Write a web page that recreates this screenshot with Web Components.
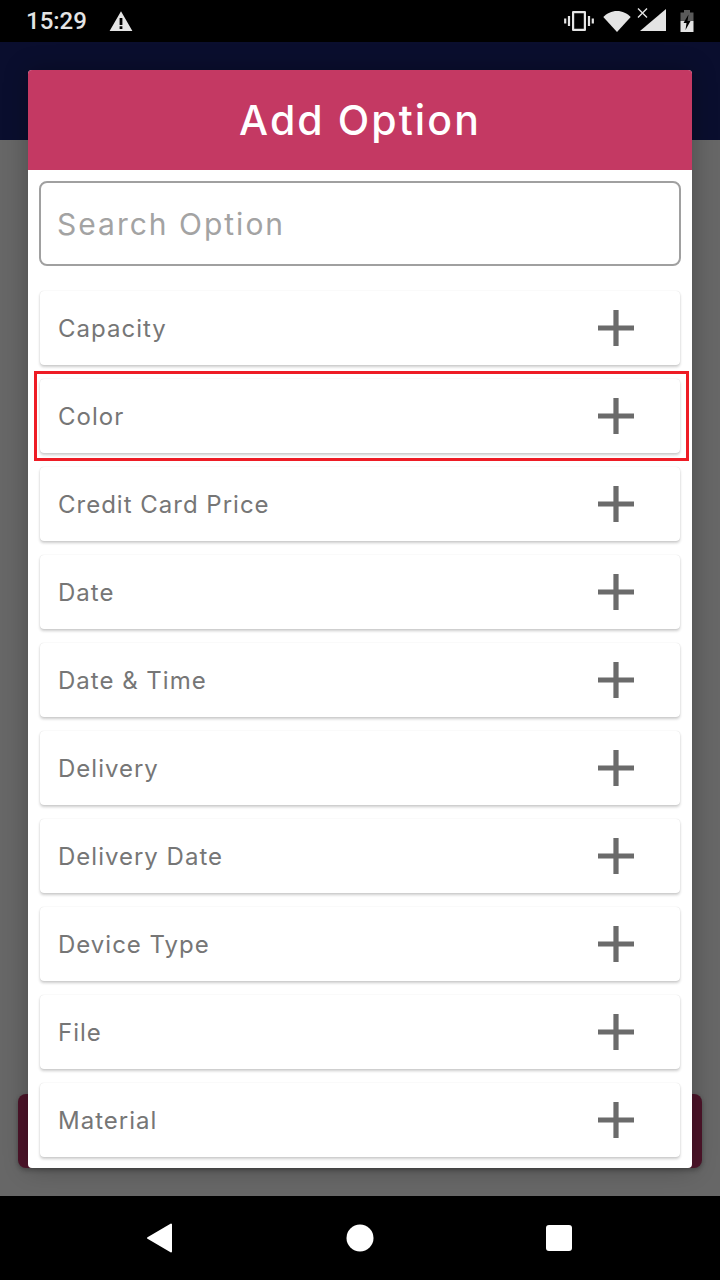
<!DOCTYPE html>
<html>
<head>
<meta charset="utf-8">
<style>
html, body { margin: 0; padding: 0; background: #000; }
body { width: 720px; height: 1280px; overflow: hidden; }
</style>
</head>
<body>
<phone-screen>
    <status-bar slot="status"></status-bar>
    <add-option-dialog slot="dialog" title-text="Add Option" placeholder="Search Option">
        <option-row>Capacity</option-row>
        <option-row marked>Color</option-row>
        <option-row>Credit Card Price</option-row>
        <option-row>Date</option-row>
        <option-row>Date &amp; Time</option-row>
        <option-row>Delivery</option-row>
        <option-row>Delivery Date</option-row>
        <option-row>Device Type</option-row>
        <option-row>File</option-row>
        <option-row>Material</option-row>
    </add-option-dialog>
    <nav-bar slot="nav"></nav-bar>
</phone-screen>

<script>
"use strict";

class PhoneScreen extends HTMLElement {
    constructor(){
        super();
        this.attachShadow({mode : 'open'});
        this.shadowRoot.innerHTML = `
            <style>
                :host {
                    display: flex;
                    flex-direction: column;
                    position: relative;
                    width: 720px;
                    height: 1280px;
                    overflow: hidden;
                }
                .appbar { height: 98px; background: #0a0e2e; flex: none; }
                .body { flex: 1; background: #676767; position: relative; }
                .save {
                    position: absolute;
                    left: 18px;
                    right: 18px;
                    top: 954px;
                    height: 74px;
                    background: #4c1429;
                    border-radius: 8px;
                    box-shadow: 0 2px 5px rgba(0,0,0,.3);
                }
                ::slotted([slot="dialog"]) {
                    position: absolute;
                    left: 28px;
                    top: 70px;
                }
            </style>
            <slot name="status"></slot>
            <div class="appbar"></div>
            <div class="body"><div class="save"></div></div>
            <slot name="nav"></slot>
            <slot name="dialog"></slot>
        `;
    }
}

class StatusBar extends HTMLElement {
    constructor(){
        super();
        this.attachShadow({mode : 'open'});
        this.shadowRoot.innerHTML = `
            <style>
                :host {
                    display: flex;
                    align-items: center;
                    height: 42px;
                    flex: none;
                    background: #000;
                    color: #e4e4e4;
                    font: 500 24px Roboto, sans-serif;
                }
                .time { margin-left: 26px; width: 83px; }
                svg { display: block; }
                .right {
                    margin-left: auto;
                    margin-right: 26px;
                    display: flex;
                    align-items: center;
                }
            </style>
            <span class="time">15:29</span>
            <svg width="24" height="22" viewBox="0 0 24 22">
                <path fill="#e4e4e4" fill-rule="evenodd" d="M12 1.2 23.4 21H.6ZM10.6 8v7h2.8V8ZM10.6 16.2v2.8h2.8v-2.8Z"/>
            </svg>
            <div class="right">
                <svg width="30" height="20" viewBox="0 0 30 20" style="margin-right:9px">
                    <path fill="none" stroke="#e4e4e4" stroke-width="2.2" d="M9.1 1.100h11.800v17.800H9.100z" stroke-linejoin="round"/>
                    <path stroke="#e4e4e4" stroke-width="2.2" d="M5 5v10M1.200 7.500v5M25 5v10M28.800 7.500v5"/>
                </svg>
                <svg width="28" height="22" viewBox="0 0 28 22" style="margin-right:6px">
                    <path fill="#e4e4e4" d="M.3 7C3.800 3.500 8.600 1 14 1s10.200 2.500 13.700 6L14 22Z"/>
                </svg>
                <svg width="30" height="26" viewBox="0 0 30 26" style="margin-right:13px">
                    <path fill="#e4e4e4" d="M29 1v22H3Z"/>
                    <path stroke="#e4e4e4" stroke-width="1.400" d="M1 .5l9 9M10 .5l-9 9" fill="none"/>
                </svg>
                <svg width="14" height="22" viewBox="0 0 14 22">
                    <path fill="#5a5a5a" d="M4 0h6v2.500h3.500V11H.5V2.500H4Z"/>
                    <path fill="#e4e4e4" d="M.5 11h13v11H.5Z"/>
                    <path fill="#000" d="M8.500 4.500 3.500 13H6.500L5.500 20l5-9H7.500Z"/>
                </svg>
            </div>
        `;
    }
}

class NavBar extends HTMLElement {
    constructor(){
        super();
        this.attachShadow({mode : 'open'});
        this.shadowRoot.innerHTML = `
            <style>
                :host {
                    display: flex;
                    height: 84px;
                    flex: none;
                    background: #000;
                    align-items: center;
                    padding-left: 145px;
                    box-sizing: border-box;
                }
                svg { display: block; }
                .back { margin-right: 173px; }
                .home { margin-right: 171px; }
            </style>
            <svg class="back" width="28" height="32" viewBox="0 0 28 32">
                <path fill="#fff" stroke="#fff" stroke-width="2" stroke-linejoin="round" d="M3 16 26 2.500v27Z"/>
            </svg>
            <svg class="home" width="28" height="28" viewBox="0 0 28 28">
                <circle cx="14" cy="14" r="13.500" fill="#fff"/>
            </svg>
            <svg class="recent" width="28" height="28" viewBox="0 0 28 28">
                <rect x="1" y="1" width="26" height="26" rx="3" fill="#fff"/>
            </svg>
        `;
    }
}

class AddOptionDialog extends HTMLElement {
    constructor(){
        super();
        this.attachShadow({mode : 'open'});
        this.shadowRoot.innerHTML = `
            <style>
                :host {
                    display: block;
                    width: 664px;
                    height: 1098px;
                    background: #fff;
                    border-radius: 4px;
                    overflow: hidden;
                    box-shadow: 0 0 24px rgba(0,0,0,.28);
                    font-family: Inter, "Liberation Sans", sans-serif;
                }
                header {
                    height: 100px;
                    background: #c43963;
                    color: #fff;
                    display: flex;
                    align-items: center;
                    justify-content: center;
                    font-size: 41px;
                    font-weight: 500;
                    letter-spacing: 2.1px;
                }
                .search {
                    box-sizing: border-box;
                    margin: 11px 11px 0;
                    height: 85px;
                    border: 2px solid #a0a0a0;
                    border-radius: 8px;
                    padding-left: 16px;
                    display: flex;
                    align-items: center;
                    color: #a3a3a3;
                    font-size: 30px;
                    letter-spacing: 2px;
                }
                .list {
                    display: flex;
                    flex-direction: column;
                    gap: 14px;
                    margin: 25px 12px 0;
                }
            </style>
            <header></header>
            <div class="search"></div>
            <div class="list"><slot></slot></div>
        `;
        this.shadowRoot.querySelector("header").textContent = this.getAttribute("title-text");
        this.shadowRoot.querySelector(".search").textContent = this.getAttribute("placeholder");
    }
}

class OptionRow extends HTMLElement {
    constructor(){
        super();
        this.attachShadow({mode : 'open'});
        this.shadowRoot.innerHTML = `
            <style>
                :host {
                    display: flex;
                    align-items: center;
                    position: relative;
                    box-sizing: border-box;
                    height: 74px;
                    padding-left: 18px;
                    background: #fff;
                    border-radius: 4px;
                    box-shadow: 0 0 1px rgba(0,0,0,.16), 0 2px 3px rgba(0,0,0,.2);
                    color: #767676;
                    font-size: 24px;
                    letter-spacing: 1px;
                }
                svg { position: absolute; left: 558px; top: 19px; display: block; }
                .mark {
                    display: none;
                    position: absolute;
                    left: -6px;
                    top: -8px;
                    width: 655px;
                    height: 90px;
                    box-sizing: border-box;
                    border: 3px solid #ee1c25;
                }
                :host([marked]) .mark { display: block; }
            </style>
            <slot></slot>
            <svg width="36" height="36" viewBox="0 0 36 36">
                <path fill="#6b6b6b" d="M15.400 0h5.200v15.400H36v5.200H20.600V36h-5.200V20.600H0v-5.200h15.400Z"/>
            </svg>
            <div class="mark"></div>
        `;
    }
}

customElements.define("phone-screen", PhoneScreen);
customElements.define("status-bar", StatusBar);
customElements.define("nav-bar", NavBar);
customElements.define("add-option-dialog", AddOptionDialog);
customElements.define("option-row", OptionRow);
</script>
</body>
</html>
